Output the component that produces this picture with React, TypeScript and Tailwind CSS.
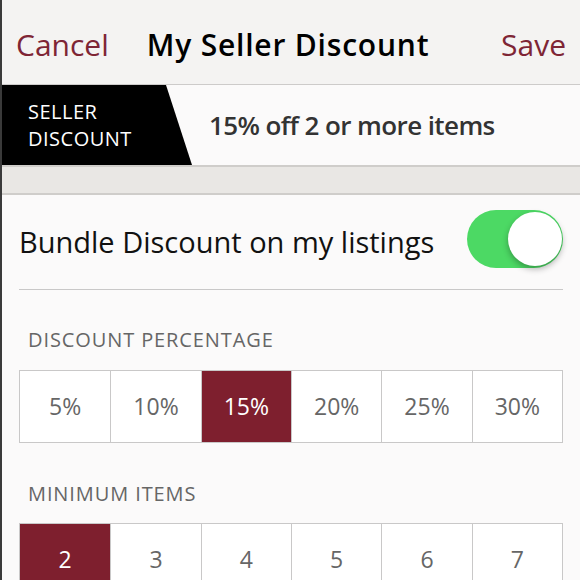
import { useState } from "react";

const percents = ["5%", "10%", "15%", "20%", "25%", "30%"];
const items = ["2", "3", "4", "5", "6", "7"];

function Options({
  values,
  active,
  onPick,
}: {
  values: string[];
  active: string;
  onPick: (v: string) => void;
}) {
  return (
    <div className="grid grid-cols-6 border-[1.5px] border-[#c9c8c8] bg-white">
      {values.map((v, i) => (
        <button
          key={v}
          onClick={() => onPick(v)}
          className={`h-[71px] flex items-center justify-center text-[23px] ${
            i > 0 ? "border-l-[1.5px] border-[#c9c8c8]" : ""
          } ${active === v ? "bg-[#7e1f2e] text-white" : "text-[#666]"}`}
        >
          {v}
        </button>
      ))}
    </div>
  );
}

export default function App() {
  const [bundle, setBundle] = useState(true);
  const [pct, setPct] = useState("15%");
  const [min, setMin] = useState("2");

  return (
    <div className="w-[580px] h-[580px] overflow-hidden flex flex-col border-l-2 border-[#3a3a3a] bg-[#fbfafa] font-['Open_Sans',sans-serif]">
      <header className="h-[85px] shrink-0 flex items-center pl-[14px] pr-[14px] pt-1 bg-[#f4f3f2] border-b border-[#cdcbca]">
        <span className="text-[30px] text-[#7e2535]">Cancel</span>
        <h1 className="ml-[38px] text-[30px] font-semibold tracking-[0.8px] text-black">My Seller Discount</h1>
        <span className="ml-auto text-[30px] text-[#7e2535]">Save</span>
      </header>

      <div className="h-[80px] shrink-0 flex items-center bg-[#fbfafa]">
        <div className="h-full w-[190px] bg-black [clip-path:polygon(0_0,164px_0,190px_100%,0_100%)] flex flex-col justify-center pl-[26px] text-white text-[20px] tracking-[0.5px] leading-[27px]">
          <span>SELLER</span>
          <span>DISCOUNT</span>
        </div>
        <span className="ml-[17px] text-[26px] font-semibold tracking-[-0.6px] text-[#333]">15% off 2 or more items</span>
      </div>

      <div className="h-[30px] shrink-0 bg-[#e9e7e4] border-t-2 border-b-2 border-[#cfcdca]" />

      <div className="px-[17px]">
        <div className="h-[95px] flex items-center justify-between border-b-[1.5px] border-[#c9c8c8]">
          <span className="text-[29px] text-[#111]">Bundle Discount on my listings</span>
          <button
            onClick={() => setBundle(!bundle)}
            className={`relative w-[96px] h-[58px] rounded-full -mt-[6px] ${bundle ? "bg-[#4cd964]" : "bg-[#e5e5e5]"}`}
          >
            <span
              className={`absolute top-[2px] w-[54px] h-[54px] rounded-full bg-white shadow-[0_3px_6px_rgba(0,0,0,0.3)] ${
                bundle ? "right-[1px]" : "left-[1px]"
              }`}
            />
          </button>
        </div>

        <div className="pt-[37px] pb-[17px] pl-[9px] text-[20px] tracking-[0.9px] text-[#666] leading-[26px]">DISCOUNT PERCENTAGE</div>
        <Options values={percents} active={pct} onPick={setPct} />

        <div className="pt-[38px] pb-[16px] pl-[9px] text-[20px] tracking-[0.9px] text-[#666] leading-[26px]">MINIMUM ITEMS</div>
        <Options values={items} active={min} onPick={setMin} />
      </div>
    </div>
  );
}
